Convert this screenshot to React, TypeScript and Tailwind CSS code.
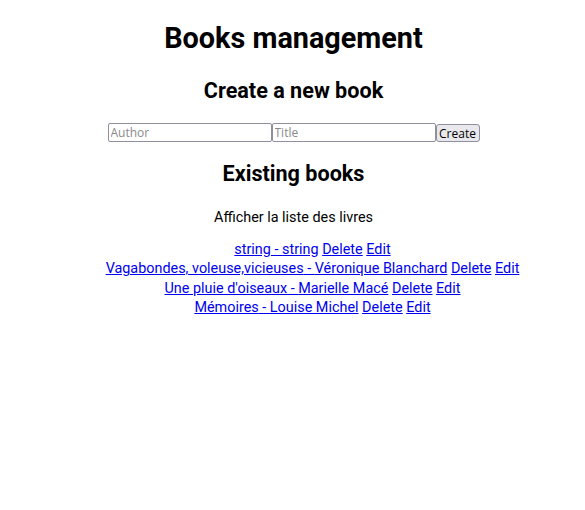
import React from "react";

const books = [
  { title: "string", author: "string" },
  { title: "Vagabondes, voleuse,vicieuses", author: "Véronique Blanchard" },
  { title: "Une pluie d'oiseaux", author: "Marielle Macé" },
  { title: "Mémoires", author: "Louise Michel" },
];

const field =
  "w-[164px] h-[19px] border border-[#8f8f9d] rounded-[2px] px-[2px] text-[12px] leading-[15px] font-['Open_Sans',sans-serif] placeholder:text-[#8a8a8a]";

const App = () => {
  return (
    <div className="text-center font-['Roboto',sans-serif] text-[14.4px] text-black bg-white">
      <h1 className="text-[28.8px] leading-[34px] font-bold pt-[21px] mb-[23px] pl-[2px]">Books management</h1>
      <h2 className="text-[21.6px] leading-[25px] font-bold mb-[20px] pl-[2px]">Create a new book</h2>
      <form className="flex justify-center pl-[2px]">
        <input placeholder="Author" className={field} />
        <input placeholder="Title" className={field} />
        <button
          type="button"
          className="w-[44px] h-[18px] mt-[1px] px-0 border border-[#8f8f9d] rounded-[3px] bg-[#e9e9ed] text-[12px] leading-[15px] font-['Open_Sans',sans-serif]"
        >
          Create
        </button>
      </form>
      <h2 className="text-[21.6px] leading-[25px] font-bold mt-[19px] mb-[23px] pl-[2px]">Existing books</h2>
      <p className="leading-[17px] mb-[14px] pl-[2px]">Afficher la liste des livres</p>
      <ul className="pl-[40px]">
        {books.map((b) => (
          <li key={b.title} className="leading-[19.3px]">
            <a href="#" className="text-[#0000ee] underline">
              {b.title} - {b.author}
            </a>{" "}
            <a href="#" className="text-[#0000ee] underline">
              Delete
            </a>{" "}
            <a href="#" className="text-[#0000ee] underline">
              Edit
            </a>
          </li>
        ))}
      </ul>
    </div>
  );
};

export default App;
